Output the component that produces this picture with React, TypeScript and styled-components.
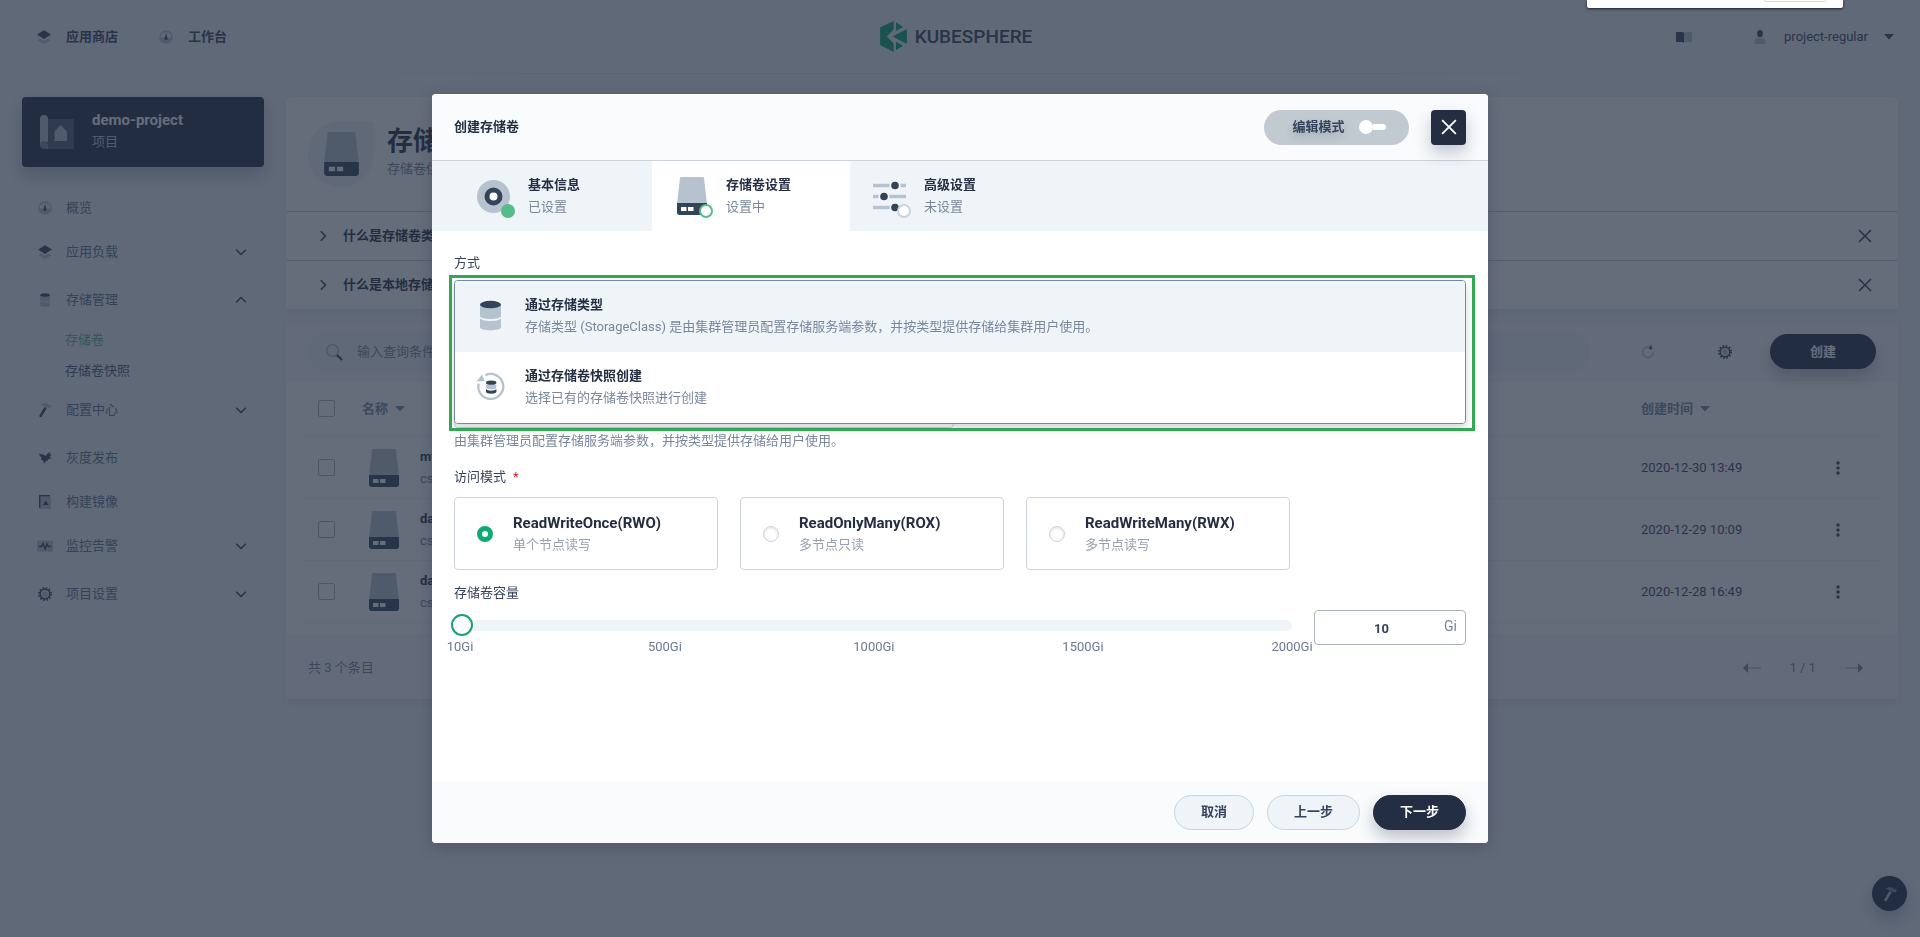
import React, { useState } from "react";
import styled, { createGlobalStyle, css } from "styled-components";

const color = {
  page: "#eff4f9",
  soft: "#f9fbfd",
  dark: "#242e42",
  text: "#36435c",
  muted: "#79879c",
  border: "#ccd3db",
  green: "#55bc8a",
  iconDark: "#324558",
  iconLight: "#b6c2cd",
};

const GlobalStyle = createGlobalStyle`
  * { box-sizing: border-box; }
  body {
    margin: 0;
    background: ${color.page};
    color: ${color.text};
    font: 400 13px/22px Roboto, "Noto Sans CJK SC", sans-serif;
  }
  button, input { font: inherit; color: inherit; }
  button { padding: 0; border: 0; background: none; cursor: pointer; }
  a { color: inherit; text-decoration: none; }
  svg { display: block; flex: none; }
  h1, h2, p, ul, fieldset, legend { margin: 0; padding: 0; border: 0; }
  ul { list-style: none; }
`;

/* ---------- icons ---------- */

type IconProps = { size?: number; light?: string; dark?: string };
const base = { light: color.iconLight, dark: color.iconDark };

const Layers = ({ size = 16 }: IconProps) => (
  <svg width={size} height={size} viewBox="0 0 16 16" aria-hidden>
    <path d="M1.500 11.300 4 9.500l4 2.200 4-2.200 2.500 1.800L8 15z" fill={base.light} />
    <path d="M1 5.500 8 1.300l7 4.200L8 9.900z" fill={base.dark} />
  </svg>
);
const Gauge = ({ size = 16 }: IconProps) => (
  <svg width={size} height={size} viewBox="0 0 16 16" aria-hidden>
    <circle cx="8" cy="8" r="6.800" fill={base.light} />
    <path d="M2.600 8.500a5.400 5.400 0 0 1 10.800 0z" fill="#eff4f9" />
    <path d="M8 3.400 9.300 9a1.400 1.400 0 1 1-2.600 0z" fill={base.dark} />
  </svg>
);
const Storage = ({ size = 16 }: IconProps) => (
  <svg width={size} height={size} viewBox="0 0 40 40" aria-hidden>
    <path d="M8 8v12.500c0 2 5.400 3.500 12 3.500s12-1.500 12-3.500V8z" fill={base.light} />
    <path d="M8 23.500v10c0 2 5.400 3.500 12 3.500s12-1.500 12-3.500v-10c-2 2-7 2.800-12 2.800s-10-.8-12-2.800z" fill={base.light} />
    <ellipse cx="20" cy="7.500" rx="12" ry="4.300" fill={base.dark} />
  </svg>
);
const Hammer = ({ size = 16, light = base.light, dark = base.dark }: IconProps) => (
  <svg width={size} height={size} viewBox="0 0 16 16" aria-hidden>
    <path d="M3.500 3.200C6 .8 9.500.8 11.300 2.300c1.200 1 2 1.200 3.700 1.700l-1.600 2.700c-1.200-.9-2.400-1.200-3.600-.7L6.800 4C5.800 3.300 4.800 3 3.500 3.200z" fill={light} />
    <path d="m7.400 5 2.200 1.400-5 8.400c-.8.900-2.600-.1-2.200-1.300z" fill={dark} />
  </svg>
);
const Bird = () => (
  <svg width="16" height="16" viewBox="0 0 16 16" aria-hidden>
    <path d="M2 3.500c2 .5 3.500.8 5 1.300.8.400 1.300.9 1.800 1.400.6-1.800 2.200-3.200 4.700-4.200l-1 2.800 2.500-.3-2.500 2.500 2.300 1.200-3.300.9c-.6 1.500-1.700 2.300-3.300 2.600L7 14l-.6-3C5 10.200 4.200 9.200 3.800 7.900l1.400.1C3.400 6.800 2.300 5.300 2 3.500z" fill={base.dark} />
  </svg>
);
const ImageDoc = () => (
  <svg width="16" height="16" viewBox="0 0 16 16" aria-hidden>
    <path d="M3.500 3H14v12H3.500z" fill={base.light} />
    <path d="M2 1h11v1.500H3.500V14H2z" fill={base.dark} />
    <path d="m8.700 6.500 3 4.500h-6z" fill={base.dark} />
  </svg>
);
const Pulse = () => (
  <svg width="16" height="16" viewBox="0 0 16 16" aria-hidden>
    <rect x="0" y="2.500" width="16" height="11" rx="1" fill={base.light} />
    <path d="M2 8.500h2.500L6 5.500l2.200 5.500L10 6l1.300 2.500H14" fill="none" stroke={base.dark} strokeWidth="1.500" />
  </svg>
);
const Gear = () => (
  <svg width="16" height="16" viewBox="0 0 16 16" aria-hidden>
    <circle cx="8" cy="8" r="6.200" fill="none" stroke={base.dark} strokeWidth="1.800" strokeDasharray="1.600 1.646" />
    <circle cx="8" cy="8" r="4.800" fill="#e3e9ef" stroke={base.dark} strokeWidth="1.500" />
    <circle cx="8" cy="8" r="2.600" fill={base.light} />
  </svg>
);
const Book = () => (
  <svg width="16" height="16" viewBox="0 0 16 16" aria-hidden>
    <path d="M8 3h8v10H8z" fill={base.light} />
    <path d="M0 3h6.500L8 4v10l-1.500-1H0z" fill={base.dark} />
  </svg>
);
const Person = () => (
  <svg width="16" height="16" viewBox="0 0 16 16" aria-hidden>
    <rect x="5.300" y="1" width="5.400" height="7" rx="2.600" fill={base.dark} />
    <path d="M2.500 13c0-2.500 1.200-4 3.300-4h4.400c2.100 0 3.300 1.500 3.300 4 0 1-.4 2-1.500 2H4c-1.100 0-1.500-1-1.500-2z" fill={base.light} />
  </svg>
);
const Caret = ({ fill = base.dark }: { fill?: string }) => (
  <svg width="10" height="6" viewBox="0 0 10 6" aria-hidden>
    <path d="M0 0h10L5 5.500z" fill={fill} />
  </svg>
);
const Chevron = ({ turn = 0 }: { turn?: number }) => (
  <svg width="12" height="12" viewBox="0 0 12 12" aria-hidden>
    <path d="m1.200 3.800 4.800 4.700 4.800-4.700" fill="none" stroke={base.dark} strokeWidth="1.600" transform={`rotate(${turn} 6 6)`} />
  </svg>
);
const Cross = ({ size = 14, stroke = base.dark }: { size?: number; stroke?: string }) => (
  <svg width={size} height={size} viewBox="0 0 14 14" aria-hidden>
    <path d="m1 1 12 12M13 1 1 13" stroke={stroke} strokeWidth="1.600" />
  </svg>
);
const Magnifier = () => (
  <svg width="18" height="18" viewBox="0 0 18 18" aria-hidden>
    <circle cx="7.500" cy="7.500" r="5.800" fill="none" stroke={base.light} strokeWidth="1.700" />
    <path d="m12 12 5 5" stroke={base.dark} strokeWidth="2.200" />
  </svg>
);
const Refresh = () => (
  <svg width="16" height="16" viewBox="0 0 16 16" aria-hidden>
    <path d="M9.500 3.200A5.300 5.300 0 1 0 13.200 8.500" fill="none" stroke={base.light} strokeWidth="1.400" />
    <path d="m11 .5 1.200 5L8.800 5z" fill={base.dark} />
  </svg>
);
const Disk = ({ width, height }: { width: number; height: number }) => (
  <svg width={width} height={height} viewBox="0 0 30 38" aria-hidden>
    <path d="M3 1c.1-.6.400-1 1-1h22c.6 0 .9.400 1 1l3 26H0z" fill={base.light} />
    <path d="M0 26h30v9.500c0 1.500-1 2.500-2.500 2.500h-25C1 38 0 37 0 35.500z" fill={base.dark} />
    <path d="M4 30h5.500v4H4zm7 0h5.500v4H11z" fill="#fff" />
  </svg>
);
const Target = () => (
  <svg width="35" height="35" viewBox="0 0 35 35" aria-hidden>
    <circle cx="17.500" cy="17.500" r="16.500" fill={base.light} />
    <circle cx="17.500" cy="17.500" r="6.500" fill="#fff" stroke={base.dark} strokeWidth="5" />
  </svg>
);
const Sliders = () => (
  <svg width="35" height="35" viewBox="0 0 35 35" aria-hidden>
    <path d="M1 6.500h16.500M28.500 6.500h5.500M1 17.500h5.500M17.500 17.500H34M1 28.500h16.500" stroke={base.light} strokeWidth="3.600" />
    <circle cx="23" cy="6.500" r="3.800" fill={base.dark} />
    <circle cx="12" cy="17.500" r="3.800" fill={base.dark} />
    <circle cx="23" cy="28.500" r="3.800" fill={base.dark} />
  </svg>
);
const Snapshot = () => (
  <svg width="35" height="35" viewBox="0 0 35 35" aria-hidden>
    <path d="M12.300 6.200A12.500 12.500 0 1 1 5.600 14.500" fill="none" stroke={base.light} strokeWidth="2.300" />
    <path d="m3.500 12.500 5.500-7 2.500 6.500z" fill={base.light} />
    <path d="M13 15.500v3c0 1.200 2.300 2 5.200 2s5.200-.8 5.200-2v-3z" fill={base.light} />
    <path d="M13 20v2.800c0 1.200 2.300 2 5.200 2s5.200-.8 5.200-2V20c-1 1.200-3 1.700-5.200 1.700S14 21.200 13 20z" fill={base.dark} />
    <ellipse cx="18.200" cy="13.700" rx="5.200" ry="2.100" fill={base.dark} />
  </svg>
);
const ProjectIcon = () => (
  <svg width="34" height="34" viewBox="0 0 34 34" aria-hidden>
    <path d="M7 4h27v30H4V8z" fill="#79879c" opacity=".5" />
    <path d="M0 4a4 4 0 0 1 8 0v23c-4-1-7 0-8 3z" fill="#b6c2cd" />
    <path d="M0 30c0-5 5-4.500 8-1v5H4a4 4 0 0 1-4-4z" fill="#79879c" />
    <path d="m20.500 10 6.500 6.500V26H14.500v-9.500z" fill="#b6c2cd" />
  </svg>
);
const Arrow = ({ flip = false }: { flip?: boolean }) => (
  <svg width="18" height="12" viewBox="0 0 18 12" aria-hidden>
    <g transform={flip ? "matrix(-1 0 0 1 18 0)" : undefined}>
      <path d="M5 6h13" stroke="#b6c2cd" strokeWidth="1.600" />
      <path d="M0 6 5 1v10z" fill="#79879c" />
    </g>
  </svg>
);
const Dots = () => (
  <svg width="4" height="14" viewBox="0 0 4 14" aria-hidden>
    <g fill={base.dark}>
      <circle cx="2" cy="2" r="1.700" />
      <circle cx="2" cy="7" r="1.700" />
      <circle cx="2" cy="12" r="1.700" />
    </g>
  </svg>
);
const LogoMark = () => (
  <svg width="27" height="31" viewBox="0 0 81 94" aria-hidden>
    <g fill="#00a971">
      <path d="M0 20 41 0v26L20 47l21 21v26L0 73z" />
      <path d="m48 4 22 14-22 12zM81 24v46L38 47zM48 63l22 12-22 14z" />
    </g>
  </svg>
);

/* ---------- page frame ---------- */

const Header = styled.header`
  display: grid;
  grid-template-columns: 1fr auto 1fr;
  align-items: center;
  height: 74px;
  padding: 0 26px 0 36px;
  border-bottom: 1px solid;
  border-image: linear-gradient(90deg, transparent 14%, #dbe2ea 30%, #dbe2ea 70%, transparent 86%) 1;
`;
const HeaderGroup = styled.nav<{ $end?: boolean }>`
  display: flex;
  align-items: center;
  gap: ${(p) => (p.$end ? 60 : 40)}px;
  justify-content: ${(p) => (p.$end ? "flex-end" : "flex-start")};
`;
const HeaderLink = styled.a`
  display: flex;
  align-items: center;
  gap: 14px;
  font-weight: 700;
`;
const UserButton = styled.button`
  display: flex;
  align-items: center;
  gap: 16px;
`;
const Logo = styled.a`
  display: flex;
  align-items: center;
  gap: 8px;
  margin-right: 18px;
  color: ${color.text};
  font-size: 19px;
  font-weight: 500;
`;
const Layout = styled.div`
  display: grid;
  grid-template-columns: 242px minmax(0, 1fr);
  gap: 22px;
  padding: 23px 22px;
`;

/* ---------- sidebar ---------- */

const ProjectCard = styled.a`
  display: flex;
  align-items: center;
  gap: 18px;
  height: 70px;
  margin-bottom: 19px;
  padding: 0 18px;
  border-radius: 4px;
  background: ${color.dark};
  box-shadow: 0 8px 16px rgba(36, 46, 66, 0.28);
  color: #b6c2cd;
`;
const ProjectText = styled.span`
  padding-bottom: 2px;
`;
const ProjectName = styled.strong`
  display: block;
  color: #fff;
  font-size: 15px;
  line-height: 22px;
`;
const NavRow = styled.a<{ $group?: boolean }>`
  display: flex;
  align-items: center;
  gap: 13px;
  height: 44px;
  margin-bottom: ${(p) => (p.$group ? 4 : 0)}px;
  padding: 0 17px 0 15px;
  color: #5f708a;
`;
const NavLabel = styled.span`
  flex: 1;
`;
const SubNav = styled.ul`
  padding: 2px 0 2px 43px;
`;
const SubLink = styled.a<{ $active?: boolean }>`
  display: block;
  line-height: 31px;
  color: ${(p) => (p.$active ? color.green : "#4a5974")};
`;

/* ---------- content ---------- */

const Card = styled.section`
  margin-bottom: 14px;
  overflow: hidden;
  border-radius: 4px;
  background: #fff;
  box-shadow: 0 4px 8px rgba(36, 46, 66, 0.06);
`;
const Intro = styled.div`
  display: flex;
  align-items: center;
  gap: 13px;
  height: 114px;
  padding: 0 22px;
`;
const IntroIcon = styled.div`
  display: grid;
  place-items: center;
  width: 66px;
  height: 66px;
  border-radius: 33px 4px 33px 33px;
  background: ${color.page};
`;
const IntroText = styled.div`
  padding-bottom: 4px;
`;
const PageTitle = styled.h1`
  color: ${color.dark};
  font-size: 26px;
  line-height: 34px;
`;
const Muted = styled.p`
  color: ${color.muted};
`;
const Faq = styled.div`
  display: flex;
  align-items: center;
  gap: 14px;
  height: 49px;
  padding: 0 26px 0 31px;
  border-top: 1px solid ${color.border};
`;
const FaqTitle = styled.button`
  flex: 1;
  text-align: left;
  font-weight: 700;
  color: ${color.dark};
`;
const Toolbar = styled.div`
  display: flex;
  align-items: center;
  height: 58px;
  padding: 0 22px;
  border-bottom: 1px solid ${color.page};
  background: ${color.soft};
`;
const Search = styled.label`
  display: flex;
  flex: 1;
  align-items: center;
  gap: 14px;
  height: 40px;
  margin-right: 50px;
  padding: 0 17px;
  border-radius: 20px;
  background: ${color.page};
`;
const SearchInput = styled.input`
  flex: 1;
  min-width: 0;
  padding: 0;
  border: 0;
  outline: 0;
  background: none;
  &::placeholder { color: ${color.muted}; opacity: 1; }
`;
const ToolButton = styled.button<{ $space: number }>`
  margin-right: ${(p) => p.$space}px;
`;
const pill = css`
  height: 35px;
  border-radius: 18px;
  font-weight: 700;
`;
const CreateButton = styled.button`
  ${pill}
  width: 106px;
  background: ${color.dark};
  box-shadow: 0 8px 16px rgba(36, 46, 66, 0.28);
  color: #fff;
`;
const TableArea = styled.div`
  padding: 0 14px 12px;
`;
const Table = styled.table`
  width: 100%;
  table-layout: fixed;
  border-spacing: 0;
`;
const Th = styled.th<{ $w?: number }>`
  width: ${(p) => (p.$w ? `${p.$w}px` : "auto")};
  height: 56px;
  padding: 0 0 0 18px;
  border-bottom: 1px solid ${color.page};
  color: ${color.muted};
  text-align: left;
`;
const Td = styled.td`
  height: 62px;
  padding: 0 0 0 18px;
  border-bottom: 1px solid ${color.page};
`;
const Sortable = styled.button`
  display: flex;
  align-items: center;
  gap: 7px;
  font-weight: 700;
`;
const MoreButton = styled.button`
  display: block;
`;
const Check = styled.input`
  display: block;
  width: 17px;
  height: 17px;
  margin: 0;
  appearance: none;
  border: 1px solid #abb4be;
  border-radius: 2px;
`;
const Volume = styled.div`
  display: flex;
  align-items: center;
  gap: 21px;
  padding-left: 7px;
`;
const VolumeName = styled.a`
  display: block;
  font-weight: 700;
  color: ${color.dark};
`;
const TableFooter = styled.footer`
  display: flex;
  align-items: center;
  justify-content: space-between;
  height: 64px;
  padding: 0 35px 0 22px;
  border-top: 1px solid ${color.page};
  background: ${color.soft};
  color: ${color.muted};
`;
const Pager = styled.div`
  display: flex;
  align-items: center;
  gap: 29px;
`;
const HelpButton = styled.button`
  position: fixed;
  right: 13px;
  bottom: 26px;
  display: grid;
  place-items: center;
  width: 35px;
  height: 35px;
  border-radius: 50%;
  background: ${color.dark};
  box-shadow: 0 8px 16px rgba(36, 46, 66, 0.28);
`;

/* ---------- dialog ---------- */

const Overlay = styled.div`
  position: fixed;
  inset: 0;
  display: flex;
  align-items: center;
  justify-content: center;
  background: rgba(36, 46, 66, 0.7);
`;
const Dialog = styled.section`
  width: 1056px;
  max-width: 100%;
  overflow: hidden;
  border-radius: 4px;
  background: #fff;
  box-shadow: 0 4px 16px rgba(36, 46, 66, 0.3);
`;
const DialogHeader = styled.header`
  display: flex;
  align-items: center;
  gap: 22px;
  height: 67px;
  padding: 0 22px;
  border-bottom: 1px solid ${color.border};
  background: ${color.soft};
`;
const DialogTitle = styled.h2`
  flex: 1;
  color: ${color.dark};
  font-size: 13px;
`;
const ModeSwitch = styled.button`
  ${pill}
  display: flex;
  align-items: center;
  justify-content: center;
  gap: 14px;
  width: 145px;
  padding-left: 5px;
  background: #c1c9d1;
  text-shadow: 0 4px 8px rgba(36, 46, 66, 0.2);
`;
const SwitchTrack = styled.span`
  display: flex;
  align-items: center;
  width: 27px;
  height: 14px;
  &::before {
    content: "";
    width: 14px;
    height: 14px;
    border-radius: 7px;
    background: #fff;
  }
  &::after {
    content: "";
    flex: 1;
    height: 6px;
    border-radius: 0 3px 3px 0;
    background: #fff;
  }
`;
const CloseButton = styled.button`
  position: relative;
  display: grid;
  place-items: center;
  width: 35px;
  height: 35px;
  border-radius: 4px;
  background: ${color.dark};
  box-shadow: 0 8px 16px rgba(36, 46, 66, 0.25);
`;
const Steps = styled.div`
  display: flex;
  height: 70px;
  padding-left: 22px;
  background: ${color.page};
`;
const Step = styled.button<{ $current?: boolean }>`
  display: flex;
  align-items: center;
  gap: 17px;
  width: 198px;
  padding-left: 22px;
  background: ${(p) => (p.$current ? "#fff" : "transparent")};
  text-align: left;
`;
const StepIcon = styled.span`
  position: relative;
  display: grid;
  place-items: center;
  width: 35px;
  height: 38px;
`;
type Status = "done" | "current" | "pending";
const StatusDot = styled.i<{ $status: Status }>`
  position: absolute;
  right: -4px;
  bottom: -3px;
  width: 14px;
  height: 14px;
  border: 2px solid ${(p) => (p.$status === "pending" ? color.border : color.green)};
  border-radius: 50%;
  background: ${(p) => (p.$status === "done" ? color.green : "#fff")};
`;
const Strong = styled.strong<{ $large?: boolean }>`
  display: block;
  color: ${color.dark};
  font-size: ${(p) => (p.$large ? 15 : 13)}px;
`;
const Sub = styled.span<{ $faint?: boolean }>`
  display: block;
  color: ${(p) => (p.$faint ? "#95a0b1" : color.muted)};
`;
const DialogBody = styled.div`
  min-height: 550px;
  padding: 21px 22px;
`;
const FieldLabel = styled.label`
  display: block;
`;
const Legend = styled.legend`
  display: block;
  padding-top: 14px;
`;
const Required = styled.span`
  margin-left: 7px;
  color: #ca2621;
`;
const Combo = styled.div`
  position: relative;
  margin: 6px 0;
`;
const ComboField = styled.div`
  position: absolute;
  top: 0;
  bottom: -4px;
  left: 0;
  width: 500px;
  border: 1px solid ${color.border};
  border-radius: 4px;
`;
const Menu = styled.ul`
  position: relative;
  overflow: hidden;
  border: 1px solid ${color.muted};
  border-radius: 4px;
  background: #fff;
  box-shadow: 0 4px 8px rgba(36, 46, 66, 0.2);
`;
const Option = styled.button<{ $selected?: boolean }>`
  display: flex;
  align-items: center;
  gap: 17px;
  width: 100%;
  height: 71px;
  padding: 0 18px 2px;
  background: ${(p) => (p.$selected ? color.page : "#fff")};
  text-align: left;
`;
const Highlight = styled.div`
  position: absolute;
  inset: -5px -9px -7px -5px;
  border: 3px solid #33a853;
  pointer-events: none;
`;
const Modes = styled.div`
  display: flex;
  gap: 22px;
  margin: 9px 0 12px;
`;
const ModeCard = styled.label`
  display: flex;
  align-items: center;
  gap: 20px;
  width: 264px;
  height: 73px;
  padding: 0 22px;
  border: 1px solid ${color.border};
  border-radius: 4px;
`;
const Radio = styled.input`
  width: 16px;
  height: 16px;
  margin: 0;
  appearance: none;
  border: 1px solid ${color.border};
  border-radius: 50%;
  background: #fff;
  box-shadow: inset 0 1px 3px rgba(36, 46, 66, 0.15);
  &:checked {
    border: 5px solid #0eaa72;
    box-shadow: none;
  }
`;
const Capacity = styled.div`
  display: flex;
  align-items: flex-start;
  gap: 22px;
  margin-top: 6px;
`;
const SliderBox = styled.div`
  flex: 1;
`;
const Slider = styled.input`
  display: block;
  width: calc(100% + 3px);
  height: 30px;
  margin: 0 0 0 -3px;
  appearance: none;
  background: none;
  &::-webkit-slider-runnable-track {
    height: 11px;
    border-radius: 6px;
    background: ${color.page};
  }
  &::-webkit-slider-thumb {
    width: 22px;
    height: 22px;
    margin-top: -6px;
    appearance: none;
    border: 2px solid #1aa374;
    border-radius: 50%;
    background: #fff;
  }
`;
const Ticks = styled.div`
  display: grid;
  grid-template-columns: 49fr 50fr 50fr 50fr 0;
  margin-top: -4px;
  padding-left: 6px;
  color: #6b7a91;
`;
const Tick = styled.span`
  display: flex;
  justify-content: center;
  width: 0;
`;
const SizeBox = styled.label`
  display: flex;
  align-items: center;
  width: 152px;
  height: 35px;
  padding: 0 8px 0 4px;
  border: 1px solid #abb4be;
  border-radius: 4px;
  color: ${color.muted};
  font-size: 14px;
`;
const SizeUnit = styled.span`
  padding-bottom: 3px;
`;
const SizeInput = styled.input`
  flex: 1;
  min-width: 0;
  padding: 3px 0 0;
  border: 0;
  outline: 0;
  background: none;
  color: ${color.text};
  font-size: 13px;
  font-weight: 700;
  text-align: center;
`;
const DialogFooter = styled.footer`
  display: flex;
  align-items: center;
  justify-content: flex-end;
  gap: 13px;
  height: 62px;
  padding: 0 22px;
  background: ${color.soft};
`;
const FooterButton = styled.button<{ $primary?: boolean }>`
  ${pill}
  padding: 0 26px;
  border: 1px solid ${(p) => (p.$primary ? color.dark : color.border)};
  background: ${(p) => (p.$primary ? color.dark : color.page)};
  color: ${(p) => (p.$primary ? "#fff" : color.text)};
  box-shadow: ${(p) => (p.$primary ? "0 8px 16px rgba(36, 46, 66, 0.28)" : "none")};
`;
const TopPopup = styled.div`
  position: fixed;
  top: 0;
  right: 77px;
  width: 256px;
  height: 8px;
  padding: 0 17px;
  border-radius: 0 0 2px 2px;
  background: #fff;
  box-shadow: 0 1px 3px rgba(0, 0, 0, 0.7);
`;
const PopupEdge = styled.div`
  width: 62px;
  height: 2px;
  margin-left: auto;
  border: 1px solid #dadce0;
  border-top: 0;
  border-radius: 0 0 3px 3px;
`;

/* ---------- data ---------- */

type NavItem = { label: string; icon: React.ReactNode; group?: boolean; open?: boolean };
const nav: NavItem[] = [
  { label: "概览", icon: <Gauge /> },
  { label: "应用负载", icon: <Layers />, group: true },
  { label: "存储管理", icon: <Storage />, group: true, open: true },
  { label: "配置中心", icon: <Hammer />, group: true },
  { label: "灰度发布", icon: <Bird /> },
  { label: "构建镜像", icon: <ImageDoc /> },
  { label: "监控告警", icon: <Pulse />, group: true },
  { label: "项目设置", icon: <Gear />, group: true },
];
const volumes = [
  { name: "my", type: "csi", time: "2020-12-30 13:49" },
  { name: "data", type: "csi", time: "2020-12-29 10:09" },
  { name: "data", type: "csi", time: "2020-12-28 16:49" },
];
const steps: { title: string; note: string; status: Status; icon: React.ReactNode }[] = [
  { title: "基本信息", note: "已设置", status: "done", icon: <Target /> },
  { title: "存储卷设置", note: "设置中", status: "current", icon: <Disk width={30} height={38} /> },
  { title: "高级设置", note: "未设置", status: "pending", icon: <Sliders /> },
];
const modes = [
  { title: "ReadWriteOnce(RWO)", note: "单个节点读写" },
  { title: "ReadOnlyMany(ROX)", note: "多节点只读" },
  { title: "ReadWriteMany(RWX)", note: "多节点读写" },
];

export default function App() {
  const [mode, setMode] = useState(0);
  const [size, setSize] = useState(10);

  return (
    <>
      <GlobalStyle />
      <Header>
        <HeaderGroup>
          <HeaderLink href="#store"><Layers />应用商店</HeaderLink>
          <HeaderLink href="#workbench"><Gauge />工作台</HeaderLink>
        </HeaderGroup>
        <Logo href="#home"><LogoMark />KUBESPHERE</Logo>
        <HeaderGroup $end>
          <a href="#docs" aria-label="文档"><Book /></a>
          <UserButton><Person />project-regular<Caret /></UserButton>
        </HeaderGroup>
      </Header>

      <Layout>
        <aside>
          <ProjectCard href="#project">
            <ProjectIcon />
            <ProjectText><ProjectName>demo-project</ProjectName>项目</ProjectText>
          </ProjectCard>
          <nav>
            {nav.map((item) => (
              <React.Fragment key={item.label}>
                <NavRow href="#nav" $group={item.group && !item.open}>
                  {item.icon}
                  <NavLabel>{item.label}</NavLabel>
                  {item.group && <Chevron turn={item.open ? 180 : 0} />}
                </NavRow>
                {item.open && (
                  <SubNav>
                    <li><SubLink href="#volumes" $active>存储卷</SubLink></li>
                    <li><SubLink href="#snapshots">存储卷快照</SubLink></li>
                  </SubNav>
                )}
              </React.Fragment>
            ))}
          </nav>
        </aside>

        <main>
          <Card>
            <Intro>
              <IntroIcon><Disk width={35} height={44} /></IntroIcon>
              <IntroText>
                <PageTitle>存储卷</PageTitle>
                <Muted>存储卷供用户创建的工作负载使用</Muted>
              </IntroText>
            </Intro>
            {["什么是存储卷类型", "什么是本地存储卷"].map((q) => (
              <Faq key={q}>
                <Chevron turn={-90} />
                <FaqTitle>{q}</FaqTitle>
                <button aria-label="关闭"><Cross /></button>
              </Faq>
            ))}
          </Card>

          <Card>
            <Toolbar>
              <Search>
                <Magnifier />
                <SearchInput placeholder="输入查询条件进行过滤" />
              </Search>
              <ToolButton $space={61} aria-label="刷新"><Refresh /></ToolButton>
              <ToolButton $space={37} aria-label="设置"><Gear /></ToolButton>
              <CreateButton>创建</CreateButton>
            </Toolbar>
            <TableArea>
              <Table>
                <thead>
                  <tr>
                    <Th $w={44}><Check type="checkbox" aria-label="全选" /></Th>
                    <Th><Sortable>名称<Caret fill={color.muted} /></Sortable></Th>
                    <Th $w={195}><Sortable>创建时间<Caret fill={color.muted} /></Sortable></Th>
                    <Th $w={66} />
                  </tr>
                </thead>
                <tbody>
                  {volumes.map((v) => (
                    <tr key={v.time}>
                      <Td><Check type="checkbox" aria-label={v.name} /></Td>
                      <Td>
                        <Volume>
                          <Disk width={30} height={38} />
                          <div><VolumeName href="#volume">{v.name}</VolumeName><Muted>{v.type}</Muted></div>
                        </Volume>
                      </Td>
                      <Td>{v.time}</Td>
                      <Td><MoreButton aria-label="更多"><Dots /></MoreButton></Td>
                    </tr>
                  ))}
                </tbody>
              </Table>
            </TableArea>
            <TableFooter>
              <span>共 3 个条目</span>
              <Pager>
                <button aria-label="上一页"><Arrow /></button>
                1 / 1
                <button aria-label="下一页"><Arrow flip /></button>
              </Pager>
            </TableFooter>
          </Card>
        </main>
      </Layout>

      <HelpButton aria-label="工具箱"><Hammer light="#79879c" dark="#b6c2cd" /></HelpButton>

      <Overlay>
        <Dialog role="dialog" aria-labelledby="dialog-title">
          <DialogHeader>
            <DialogTitle id="dialog-title">创建存储卷</DialogTitle>
            <ModeSwitch role="switch" aria-checked={false}>编辑模式<SwitchTrack /></ModeSwitch>
            <CloseButton aria-label="关闭"><Cross size={16} stroke="#fff" /></CloseButton>
          </DialogHeader>
          <Steps>
            {steps.map((s) => (
              <Step key={s.title} $current={s.status === "current"}>
                <StepIcon>{s.icon}<StatusDot $status={s.status} /></StepIcon>
                <span><Strong>{s.title}</Strong><Sub>{s.note}</Sub></span>
              </Step>
            ))}
          </Steps>
          <DialogBody>
            <FieldLabel as="div" id="method-label">方式</FieldLabel>
            <Combo>
              <ComboField />
              <Menu aria-labelledby="method-label">
                <li>
                  <Option $selected>
                    <Storage size={35} />
                    <span>
                      <Strong>通过存储类型</Strong>
                      <Sub>存储类型 (StorageClass) 是由集群管理员配置存储服务端参数，并按类型提供存储给集群用户使用。</Sub>
                    </span>
                  </Option>
                </li>
                <li>
                  <Option>
                    <Snapshot />
                    <span><Strong>通过存储卷快照创建</Strong><Sub>选择已有的存储卷快照进行创建</Sub></span>
                  </Option>
                </li>
              </Menu>
              <Highlight />
            </Combo>
            <Muted>由集群管理员配置存储服务端参数，并按类型提供存储给用户使用。</Muted>

            <fieldset>
              <Legend>访问模式<Required>*</Required></Legend>
              <Modes>
                {modes.map((m, i) => (
                  <ModeCard key={m.title}>
                    <Radio type="radio" name="access-mode" checked={mode === i} onChange={() => setMode(i)} />
                    <span><Strong $large>{m.title}</Strong><Sub $faint>{m.note}</Sub></span>
                  </ModeCard>
                ))}
              </Modes>
            </fieldset>

            <FieldLabel htmlFor="capacity">存储卷容量</FieldLabel>
            <Capacity>
              <SliderBox>
                <Slider id="capacity" type="range" min={10} max={2000} value={size} onChange={(e) => setSize(Number(e.target.value))} />
                <Ticks>
                  {["10Gi", "500Gi", "1000Gi", "1500Gi", "2000Gi"].map((t) => <Tick key={t}>{t}</Tick>)}
                </Ticks>
              </SliderBox>
              <SizeBox>
                <SizeInput aria-label="容量" value={size} onChange={(e) => setSize(Number(e.target.value) || 10)} />
                <SizeUnit>Gi</SizeUnit>
              </SizeBox>
            </Capacity>
          </DialogBody>
          <DialogFooter>
            <FooterButton>取消</FooterButton>
            <FooterButton>上一步</FooterButton>
            <FooterButton $primary>下一步</FooterButton>
          </DialogFooter>
        </Dialog>
      </Overlay>

      <TopPopup><PopupEdge /></TopPopup>
    </>
  );
}
